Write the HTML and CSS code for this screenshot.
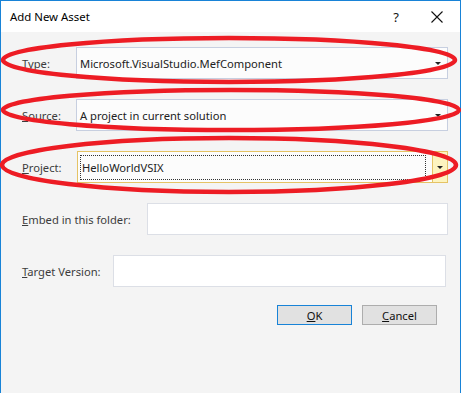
FILE: index.html
```html
<!DOCTYPE html>
<html>
<head>
    <title>Add New Asset</title>
    <link rel="stylesheet" href="styles.css">
</head>
<body>
<div class="window">
    <div class="titlebar">
        <span class="title">Add New Asset</span>
        <span class="help">?</span>
        <span class="close">
            <svg width="12" height="12" viewBox="0 0 12 12"><path d="M0.5 0.5 L11.5 11.5 M11.5 0.5 L0.5 11.5" stroke="#111" stroke-width="1.1" fill="none"/></svg>
        </span>
    </div>
    <div class="content">
        <div class="row">
            <label class="lbl lbl-type"><u>T</u>ype:</label>
            <div class="combo">
                <span class="value">Microsoft.VisualStudio.MefComponent</span>
                <span class="arrow"></span>
            </div>
        </div>
        <div class="row">
            <label class="lbl lbl-type"><u>S</u>ource:</label>
            <div class="combo">
                <span class="value">A project in current solution</span>
                <span class="arrow"></span>
            </div>
        </div>
        <div class="row">
            <label class="lbl lbl-project"><u>P</u>roject:</label>
            <div class="combo focused">
                <span class="value"><span class="focus-rect">HelloWorldVSIX</span></span>
                <span class="drop-btn"><span class="arrow"></span></span>
            </div>
        </div>
        <div class="row">
            <label class="lbl lbl-embed"><u>E</u>mbed in this folder:</label>
            <div class="textbox embed"></div>
        </div>
        <div class="row">
            <label class="lbl lbl-target"><u>T</u>arget Version:</label>
            <div class="textbox target"></div>
        </div>
        <div class="buttons">
            <button class="btn default"><u>O</u>K</button>
            <button class="btn"><u>C</u>ancel</button>
        </div>
    </div>

    <!-- red marker ellipses drawn over the dialog -->
    <svg class="marks" width="461" height="393" viewBox="0 0 461 393">
        <ellipse cx="229" cy="60" rx="226" ry="22" />
        <ellipse cx="231" cy="110" rx="228" ry="20" />
        <ellipse cx="229" cy="165" rx="227" ry="27" />
    </svg>
</div>
</body>
</html>
```

FILE: styles.css
```css
body { margin: 0; font-family: "Noto Sans", "Open Sans", sans-serif; font-size: 11.2px; color: #1e1e1e; }
.window { position: relative; width: 459px; height: 392px; border: 1px solid #1883d7; border-bottom: none; background: #f4f4f4; }
.titlebar { height: 31px; background: #fff; display: flex; align-items: center; padding-left: 9px; }
.title { flex: 1; font-size: 11.4px; color: #000; }
.help { width: 20px; font-size: 13px; color: #111; text-align: center; margin-right: 25px; }
.close { width: 12px; margin-right: 17px; display: flex; }
.content { padding: 15px 12px 0 21px; }
.row { display: flex; align-items: center; height: 32px; margin-bottom: 20px; }
.lbl { color: #3c3c3c; }
.lbl-type { width: 54px; }
.lbl-project { width: 55px; }
.lbl-embed { width: 125px; }
.lbl-target { width: 91px; }
.combo { flex: 1; height: 30px; border: 1px solid #c7cfe0; background: #fcfcfc; display: flex; align-items: center; }
.combo .value { flex: 1; padding-left: 3px; color: #222; }
.combo > .arrow { margin-right: 6px; }
.arrow { width: 0; height: 0; border-left: 3px solid transparent; border-right: 3px solid transparent; border-top: 3px solid #222; }
.focused { border-color: #e5c365; }
.focused .value { padding-left: 2px; }
.focus-rect { display: block; border: 1px dotted #333; margin-right: 6px; padding: 4px 0 4px 1px; }
.drop-btn { width: 14px; height: 30px; background: #fdf4bf; border-left: 1px solid #e5c365; display: flex; align-items: center; justify-content: center; }
.textbox { height: 30px; background: #fff; border: 1px solid #dcdfe6; }
.embed { width: 299px; }
.target { width: 331px; }
.buttons { display: flex; justify-content: flex-end; gap: 10px; margin-top: -2px; padding-right: 11px; }
.btn { width: 75px; height: 20px; font-family: inherit; font-size: 11.2px; color: #111; background: #e1e1e1; border: 1px solid #adadad; padding: 0; }
.btn.default { border-color: #1883d7; }
.marks { position: absolute; left: -1px; top: -1px; pointer-events: none; }
.marks ellipse { fill: none; stroke: #ed1c24; stroke-width: 4.5; }
```
